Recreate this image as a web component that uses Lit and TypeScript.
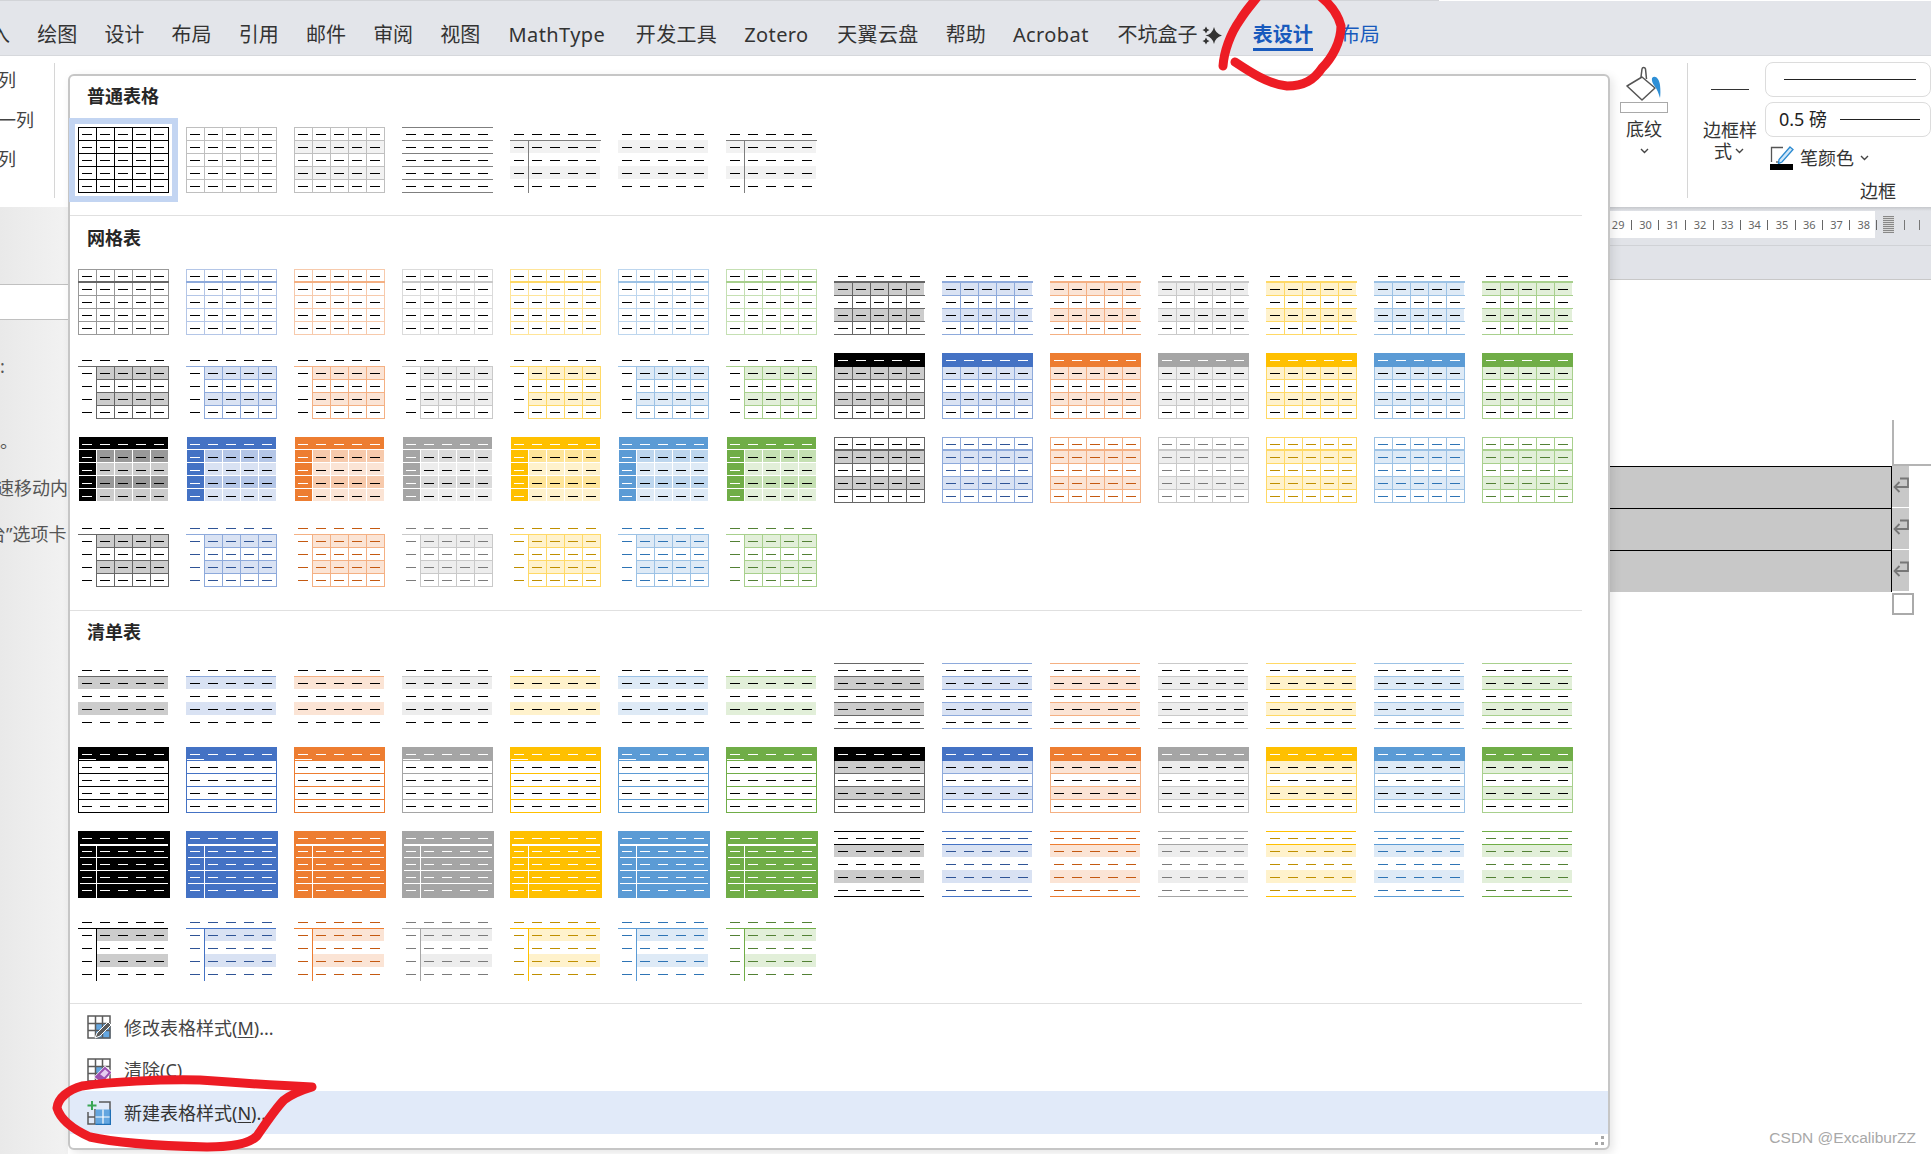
import { LitElement, html, css, svg } from "lit";
import { customElement } from "lit/decorators.js";

// one theme colour of the office palette: strong, 60% line, 40% line, 20% tint, dark text
type Tone = { accent: string; l60: string; l40: string; t20: string; dark: string };
type Shape = [number, number, number, number, string];

const TONES: Tone[] = [
  { accent: "#000000", l60: "#666666", l40: "#999999", t20: "#cccccc", dark: "#000000" },
  { accent: "#4472c4", l60: "#8eaadb", l40: "#b4c6e7", t20: "#d9e2f3", dark: "#2f5496" },
  { accent: "#ed7d31", l60: "#f4b083", l40: "#f7caac", t20: "#fbe4d5", dark: "#c45911" },
  { accent: "#a5a5a5", l60: "#c9c9c9", l40: "#dbdbdb", t20: "#ededed", dark: "#7b7b7b" },
  { accent: "#ffc000", l60: "#ffd966", l40: "#ffe599", t20: "#fff2cc", dark: "#bf8f00" },
  { accent: "#5b9bd5", l60: "#9cc2e5", l40: "#bdd6ee", t20: "#deeaf6", dark: "#2e74b5" },
  { accent: "#70ad47", l60: "#a8d08d", l40: "#c5e0b3", t20: "#e2efd9", dark: "#538135" },
];

const COL = 18;
const ROW = 13;
const W = 91;
const H = 66;

function hlines(rows: number[], color: string, x = 0, w = W): Shape[] {
  return rows.map((j) => [x, j * ROW, w, 1, color] as Shape);
}

function vlines(cols: number[], color: string, y = 0, h = H): Shape[] {
  return cols.map((i) => [i * COL, y, 1, h, color] as Shape);
}

function bands(color: string, x = 0, w = W - 1): Shape[] {
  return [1, 3].map((j) => [x, j * ROW, w, ROW, color] as Shape);
}

function dashes(color: string | ((i: number, j: number) => string)): Shape[] {
  const out: Shape[] = [];
  for (let j = 0; j < 5; j++) {
    for (let i = 0; i < 5; i++) {
      out.push([i * COL + 4, j * ROW + 7, 10, 1, typeof color === "string" ? color : color(i, j)]);
    }
  }
  return out;
}

const ALL_COLS = [0, 1, 2, 3, 4, 5];
const ALL_ROWS = [0, 1, 2, 3, 4, 5];

function plainShapes(n: number): Shape[] {
  const K = "#000000";
  const line = "#7f7f7f";
  const soft = "#bfbfbf";
  const band = "#f2f2f2";
  switch (n) {
    case 1:
      return [...hlines(ALL_ROWS, K), ...vlines(ALL_COLS, K), ...dashes(K)];
    case 2:
      return [...hlines(ALL_ROWS, soft), ...vlines(ALL_COLS, soft), ...dashes(K)];
    case 3:
      return [...bands(band), ...hlines(ALL_ROWS, soft), ...vlines(ALL_COLS, soft), ...dashes(K)];
    case 4:
      return [...hlines(ALL_ROWS, line), ...dashes(K)];
    case 6:
      return [...bands(band), ...dashes(K)];
    default:
      return [...bands(band), ...hlines([1], line), ...vlines([1], line, ROW, H - ROW), ...dashes(K)];
  }
}

function gridThree(t: Tone, text: string): Shape[] {
  return [
    ...bands(t.t20, COL, W - COL),
    ...hlines([1], t.l60),
    ...hlines([2, 3, 4, 5], t.l60, COL, W - COL),
    ...vlines([1, 2, 3, 4, 5], t.l60, ROW, H - ROW),
    ...dashes(text),
  ];
}

const gridKinds: ((t: Tone) => Shape[])[] = [
  (t) => [
    ...hlines(ALL_ROWS, t.l40),
    ...vlines(ALL_COLS, t.l40),
    [0, ROW - 1, W, 2, t.l60],
    ...dashes("#000000"),
  ],
  (t) => [
    ...bands(t.t20),
    ...hlines([2, 3, 4, 5], t.l60),
    ...vlines([1, 2, 3, 4], t.l60, ROW, H - ROW),
    [0, ROW - 1, W, 2, t.l60],
    ...dashes("#000000"),
  ],
  (t) => gridThree(t, "#000000"),
  (t) => [
    ...bands(t.t20),
    ...hlines([2, 3, 4, 5], t.l60),
    ...vlines(ALL_COLS, t.l60, ROW, H - ROW),
    [0, 0, W, ROW + 1, t.accent],
    ...dashes((_, j) => (j === 0 ? "#ffffff" : "#000000")),
  ],
  (t) => {
    const out: Shape[] = [[1, 0, W - 2, ROW - 1, t.accent]];
    for (let j = 1; j < 5; j++) {
      out.push([1, j * ROW, COL - 1, ROW - 1, t.accent]);
      for (let i = 1; i < 5; i++) {
        out.push([i * COL + 1, j * ROW, COL - 1, ROW - 1, j % 2 ? t.l40 : t.t20]);
      }
    }
    return [...out, ...dashes((i, j) => (i === 0 || j === 0 ? "#ffffff" : "#000000"))];
  },
  (t) => [
    ...bands(t.t20),
    ...hlines(ALL_ROWS, t.l60),
    ...vlines(ALL_COLS, t.l60),
    [0, ROW - 1, W, 2, t.l60],
    ...dashes(t.dark),
  ],
  (t) => gridThree(t, t.dark),
];

const listKinds: ((t: Tone) => Shape[])[] = [
  (t) => [...bands(t.t20), ...hlines([1], t.l60, 0, W - 1), ...dashes("#000000")],
  (t) => [...bands(t.t20), ...hlines(ALL_ROWS, t.l60, 0, W - 1), ...dashes("#000000")],
  (t) => [
    ...hlines([2, 3, 4, 5], t.accent),
    ...vlines([0, 5], t.accent),
    [0, 0, W, ROW + 1, t.accent],
    [1, ROW - 1, COL - 1, 1, "#ffffff"],
    ...dashes((_, j) => (j === 0 ? "#ffffff" : "#000000")),
  ],
  (t) => [
    ...bands(t.t20),
    ...hlines([2, 3, 4, 5], t.l60),
    ...vlines([0, 5], t.l60, ROW, H - ROW),
    [0, 0, W, ROW + 1, t.accent],
    ...dashes((_, j) => (j === 0 ? "#ffffff" : "#000000")),
  ],
  (t) => [
    [0, 0, W + 1, H + 1, t.accent],
    [2, ROW, W - 3, 2, "#ffffff"],
    ...hlines([2, 3, 4], "#ffffff", 2, W - 3),
    [COL, ROW + 1, 1, H - ROW, "#ffffff"],
    ...dashes("#ffffff"),
  ],
  (t) => [
    ...bands(t.t20),
    ...hlines([0, 1], t.accent, 0, W - 1),
    [0, H - 1, W - 1, 1, t.accent],
    ...dashes(t.dark),
  ],
  (t) => [
    ...bands(t.t20, COL, W - COL - 1),
    ...hlines([1], t.accent, 0, W - 1),
    ...vlines([1], t.accent, ROW, H - ROW),
    ...dashes(t.dark),
  ],
];

function thumb(shapes: Shape[], selected = false) {
  return html`<svg class="thumb ${selected ? "selected" : ""}" width="91" height="66" viewBox="0 0 91 66" shape-rendering="crispEdges">
    ${shapes.map(([x, y, w, h, c]) => svg`<rect x=${x} y=${y} width=${w} height=${h} fill=${c}></rect>`)}
  </svg>`;
}

function star(x: number, y: number, r: number) {
  const k = r * 0.18;
  return `M${x} ${y - r}Q${x + k} ${y - k} ${x + r} ${y}Q${x + k} ${y + k} ${x} ${y + r}Q${x - k} ${y + k} ${x - r} ${y}Q${x - k} ${y - k} ${x} ${y - r}Z`;
}

const TABS = [
  { text: "绘图" },
  { text: "设计" },
  { text: "布局" },
  { text: "引用" },
  { text: "邮件" },
  { text: "审阅" },
  { text: "视图" },
  { text: "MathType", cls: "latin first-latin" },
  { text: "开发工具", cls: "four" },
  { text: "Zotero", cls: "latin" },
  { text: "天翼云盘", cls: "four" },
  { text: "帮助" },
  { text: "Acrobat", cls: "latin" },
];
const RULER = [29, 30, 31, 32, 33, 34, 35, 36, 37, 38];

const chevron = html`<svg class="chev" width="9" height="6" viewBox="0 0 9 6"><path d="M1 1l3.5 3.5L8 1" fill="none" stroke="#444" stroke-width="1.4"></path></svg>`;

const gridLines = svg`<path d="M1 1h22v22H1zM1 8.5h22M1 15.5h22M8.5 1v22M15.5 1v22" fill="none" stroke="#5a5a5a" stroke-width="1.5"></path>`;

const iconModify = html`<svg class="menu-icon" width="24" height="24" viewBox="0 0 24 24">
  <rect x="8.5" y="8.5" width="15" height="15" fill="#63a6e0"></rect>${gridLines}
  <path d="M21 7l3 3-11 11-5 2 2-5z" fill="#5a5a5a" stroke="#fff" stroke-width="1"></path>
</svg>`;
const iconClear = html`<svg class="menu-icon" width="24" height="24" viewBox="0 0 24 24">
  <rect x="8.5" y="8.5" width="7" height="7" fill="#63a6e0"></rect>${gridLines}
  <path d="M18 9l6 5-9 10-7-5z" fill="#fff" stroke="#fff" stroke-width="2"></path>
  <path d="M18 10l5 4.500-8 9-6-4.500z" fill="#e6cdf0" stroke="#9b4fb0" stroke-width="2"></path>
  <path d="M9 19.500l6 4.500 3.500-3.800-6-4.500z" fill="#9b4fb0"></path>
</svg>`;
const iconNew = html`<svg class="menu-icon" width="24" height="24" viewBox="0 0 24 24">
  <path d="M1 11v12h22V1H12" fill="none" stroke="#5a5a5a" stroke-width="1.500"></path>
  <path d="M1 16h7M8 8v15" fill="none" stroke="#5a5a5a" stroke-width="1.500"></path>
  <rect x="8.500" y="8.500" width="15" height="15" fill="#63a6e0"></rect>
  <path d="M8.500 16h15M16 8.500v15" stroke="#fff" stroke-width="1.200"></path>
  <path d="M8.500 23.500h15V8.500" fill="none" stroke="#1f6fb5" stroke-width="1.500"></path>
  <path d="M5 0v9M.5 4.500h9" stroke="#3aa655" stroke-width="2"></path>
</svg>`;

const returnMark = html`<svg class="ret" width="17" height="18" viewBox="0 0 17 18"><path d="M8 1.500h8v8.500H2.500M7.500 5L2.500 10l5 5" fill="none" stroke="#777" stroke-width="1.800"></path></svg>`;

@customElement("app-root")
export class AppRoot extends LitElement {
  static styles = css`
    :host {
      display: block;
      position: relative;
      width: 1931px;
      height: 1154px;
      overflow: hidden;
      background: #fff;
      color: #333;
      font-family: "Noto Sans", "Noto Sans CJK SC", sans-serif;
    }

    .title-edge {
      width: 1439px;
      height: 1px;
      background: #d2d4d8;
    }
    .tabs {
      display: flex;
      align-items: center;
      gap: 27.200px;
      box-sizing: border-box;
      height: 55px;
      padding: 15px 0 1px;
      background: #e3e5ea;
      border-bottom: 1px solid #d6d8dc;
      font-size: 20px;
      line-height: 28px;
      white-space: nowrap;
    }
    .tab-cut {
      margin-left: -10px;
    }
    .latin {
      letter-spacing: 0.4px;
      margin-right: 1.500px;
    }
    .first-latin {
      margin-left: 1px;
      margin-right: 3.500px;
    }
    .four {
      letter-spacing: 0.3px;
    }
    .tab-sparkle {
      display: flex;
      align-items: center;
      gap: 5px;
      margin-right: 3px;
    }
    .tab-active {
      position: relative;
      color: #185abd;
      font-weight: 700;
    }
    .tab-active::after {
      content: "";
      position: absolute;
      left: 0;
      right: 0;
      bottom: -2px;
      height: 3px;
      background: #185abd;
    }
    .tab-blue {
      color: #185abd;
    }

    .ribbon {
      display: flex;
      height: 151px;
      background: #fff;
      font-size: 18px;
      line-height: 24px;
    }
    .left-group {
      display: flex;
      flex-direction: column;
      gap: 15.500px;
      flex: none;
      box-sizing: border-box;
      width: 55px;
      height: 135px;
      margin-top: 7px;
      padding-top: 5px;
      border-right: 1px solid #d6d6d6;
      overflow: hidden;
      white-space: nowrap;
      color: #444;
    }
    .left-group span {
      margin-left: -2px;
    }
    .left-group span.wide {
      margin-left: -20px;
    }
    .spacer {
      flex: 1;
    }
    .shade {
      display: flex;
      flex-direction: column;
      align-items: center;
      flex: none;
      width: 48px;
      margin-right: 19px;
      padding-top: 9px;
    }
    .swatch {
      box-sizing: border-box;
      width: 48px;
      height: 11px;
      margin-top: 1px;
      border: 1px solid #a9a9a9;
    }
    .shade-label {
      margin-top: 4px;
    }
    .shade .chev {
      margin-top: 7px;
    }
    .divider {
      flex: none;
      width: 1px;
      height: 135px;
      margin-top: 7px;
      background: #d6d6d6;
    }
    .style-col {
      display: flex;
      flex-direction: column;
      align-items: center;
      flex: none;
      width: 56px;
      margin: 0 7px 0 14px;
      padding-top: 33px;
      text-align: center;
    }
    .sample {
      width: 38px;
      height: 1px;
      background: #333;
    }
    .style-label {
      margin-top: 28px;
    }
    .style-second {
      display: flex;
      align-items: center;
      gap: 3px;
      margin: -3px 0 0 -2px;
    }
    .options {
      flex: none;
      width: 166px;
      padding-top: 6px;
    }
    .combo {
      display: flex;
      align-items: center;
      box-sizing: border-box;
      height: 35px;
      margin-bottom: 5px;
      padding-left: 18px;
      border: 1px solid #dcdcdc;
      border-radius: 8px;
      color: #222;
    }
    .combo i {
      display: block;
      width: 132px;
      height: 1px;
      background: #222;
    }
    .combo span {
      margin: -2px 0 0 -5px;
    }
    .combo span + i {
      width: 80px;
      margin: 0 10px 0 auto;
    }
    .pen {
      display: flex;
      align-items: center;
      height: 25px;
      margin-top: 8px;
      padding-left: 5px;
    }
    .pen span {
      margin: 0 6px;
    }
    .group-name {
      margin: 9px 0 0 95px;
    }

    .main {
      display: flex;
      height: 947px;
    }
    .nav {
      flex: none;
      box-sizing: border-box;
      width: 68px;
      padding-top: 77px;
      background: linear-gradient(90deg, #e9e9e9, #f2f2f2);
      font-size: 18px;
      line-height: 24px;
      white-space: nowrap;
      overflow: hidden;
      color: #555;
    }
    .nav-box {
      height: 34px;
      margin-bottom: 34px;
      background: #fff;
      border-top: 1px solid #c0c0c0;
      border-bottom: 1px solid #c0c0c0;
    }
    .nav p {
      margin: 0 0 51px;
    }
    .nav p.dot {
      margin: 0 0 23px;
    }
    .nav p.cut {
      margin: 0 0 22px -4px;
    }
    .nav p.cut2 {
      margin-left: -12px;
    }
    .work {
      flex: 1;
      min-width: 0;
    }
    .ruler-band {
      height: 73px;
      box-sizing: border-box;
      background: #e1e3e8;
      border-bottom: 1px solid #c8c8c8;
    }
    .band-shadow {
      height: 4px;
      background: linear-gradient(#c6c8cc, #e1e3e8);
    }
    .ruler {
      display: flex;
      align-items: center;
      height: 27px;
      font-size: 11px;
      line-height: 16px;
      color: #666;
    }
    .ruler-white {
      display: flex;
      align-items: center;
      box-sizing: border-box;
      flex: none;
      width: 1807px;
      height: 27px;
      padding-left: 1536.500px;
      background: #fff;
    }
    .ruler-cell {
      position: relative;
      flex: none;
      width: 27.300px;
      text-align: center;
    }
    .ruler-cell::after {
      content: "";
      position: absolute;
      right: 0;
      top: 3px;
      width: 1px;
      height: 10px;
      background: #666;
    }
    .hatch {
      flex: none;
      width: 11px;
      height: 17px;
      margin-left: 8px;
      background: repeating-linear-gradient(#888 0 1px, #d8d8d8 1px 2px);
    }
    .tick {
      flex: none;
      width: 1px;
      height: 10px;
      margin-left: 10px;
      background: #777;
    }
    .tick + .tick {
      margin-left: 14px;
    }
    .ruler-line {
      height: 7px;
      border-bottom: 1px solid #d0d2d6;
    }
    .page {
      box-sizing: border-box;
      height: 874px;
      padding: 140px 0 0 1542px;
      background: #fff;
    }
    .crop {
      box-sizing: border-box;
      width: 39px;
      height: 46px;
      margin-left: 282px;
      border-left: 2px solid #b4b4b4;
      border-bottom: 2px solid #b4b4b4;
    }
    .doc-row {
      display: flex;
    }
    .doc-cell {
      box-sizing: border-box;
      width: 282px;
      height: 42px;
      background: #c8c8c8;
      border-top: 1px solid #000;
      border-right: 1px solid #000;
    }
    .doc-row:last-of-type .doc-cell {
      border-bottom: 1px solid #000;
    }
    .doc-mark {
      box-sizing: border-box;
      width: 17px;
      height: 42px;
      padding-top: 11px;
      background: #c8c8c8;
      border-bottom: 1px solid #fff;
      overflow: hidden;
    }
    .ret {
      display: block;
    }
    .end-box {
      box-sizing: border-box;
      width: 22px;
      height: 22px;
      margin: 1px 0 0 282px;
      border: 2px solid #aaa;
    }

    .panel {
      position: absolute;
      left: 68px;
      top: 74px;
      box-sizing: border-box;
      width: 1542px;
      height: 1076px;
      background: #fff;
      border: 2px solid #c6c6c6;
      border-radius: 6px;
      box-shadow: 3px 3px 10px rgba(0, 0, 0, 0.1);
    }
    .section {
      margin-right: 26px;
      padding: 9px 0 22px 8px;
      border-bottom: 1px solid #e0e0e0;
    }
    .section.top {
      padding-top: 8px;
    }
    .section.mid {
      padding: 10px 0 23px 8px;
    }
    .section-label {
      margin: 0 0 19px 9px;
      font-size: 18px;
      line-height: 24px;
      font-weight: 700;
      color: #262626;
    }
    .thumbs {
      display: grid;
      grid-template-columns: repeat(14, 91px);
      grid-auto-rows: 66px;
      column-gap: 17px;
      row-gap: 18px;
    }
    .thumb {
      display: block;
      overflow: visible;
    }
    .thumb.selected {
      background: #fff;
      box-shadow: 0 0 0 3px #fff, 0 0 0 9px #c3d5f2;
    }
    .menu {
      padding-top: 2px;
    }
    .menu-item {
      display: flex;
      align-items: center;
      gap: 13px;
      height: 43px;
      padding-left: 17px;
      font-size: 18px;
      color: #444;
    }
    .menu-item:first-child {
      height: 42px;
    }
    .menu-item.active {
      background: #e1eaf9;
      color: #333;
    }
    .menu-icon {
      flex: none;
    }
    .menu-item span {
      margin-top: -1px;
    }
    .menu-item u {
      text-underline-offset: 2px;
    }
    .grip {
      position: absolute;
      right: 3px;
      bottom: 2px;
    }
    .watermark {
      position: absolute;
      right: 15px;
      bottom: 7px;
      font-family: "Liberation Sans", sans-serif;
      font-size: 15.500px;
      line-height: 18px;
      color: #a8a8a8;
    }
    .marks {
      position: absolute;
      left: 0;
      top: 0;
      pointer-events: none;
    }
  `;

  private renderThumbs(kinds: ((t: Tone) => Shape[])[]) {
    return kinds.flatMap((k) => TONES.map((t) => thumb(k(t))));
  }

  private renderRibbon() {
    return html`<div class="ribbon">
      <div class="left-group">
        <span>列</span>
        <span class="wide">第一列</span>
        <span>列</span>
      </div>
      <div class="spacer"></div>
      <div class="shade">
        <svg width="36" height="36" viewBox="0 0 36 36">
          <path d="M15 12l1-8c.3-2 3-2 3.500 0l1 10M16 12L1 21l15 14 13-12z" fill="#fff" stroke="#555" stroke-width="1.500" stroke-linejoin="round"></path>
          <path d="M26 13c3-3 7 0 8 7 .6 5 .5 10 0 13-1.500-5-3-9-5.500-12-2-2.500-3-5.500-2.500-8z" fill="#2e8fd6"></path>
        </svg>
        <div class="swatch"></div>
        <div class="shade-label">底纹</div>
        ${chevron}
      </div>
      <div class="divider"></div>
      <div class="style-col">
        <div class="sample"></div>
        <div class="style-label">边框样</div>
        <div class="style-second">式 ${chevron}</div>
      </div>
      <div class="options">
        <div class="combo"><i></i></div>
        <div class="combo"><span>0.5 磅</span><i></i></div>
        <div class="pen">
          <svg width="24" height="24" viewBox="0 0 24 24">
            <path d="M13 1.500H1.500V16" fill="none" stroke="#555" stroke-width="1.300"></path>
            <path d="M9 16h-3" fill="none" stroke="#555" stroke-width="1.300"></path>
            <path d="M20 1l3 2.500-11 12.500-3.500 1.500.5-4z" fill="#cfe6f8" stroke="#2b8ad0" stroke-width="1.300"></path>
            <rect x="0" y="18" width="23" height="6" fill="#000"></rect>
          </svg>
          <span>笔颜色</span>${chevron}
        </div>
        <div class="group-name">边框</div>
      </div>
    </div>`;
  }

  private renderPage() {
    return html`<div class="work">
      <div class="ruler-band">
        <div class="band-shadow"></div>
        <div class="ruler">
          <div class="ruler-white">
            ${RULER.map((n) => html`<span class="ruler-cell">${n}</span>`)}
          </div>
          <span class="hatch"></span><span class="tick"></span><span class="tick"></span>
        </div>
        <div class="ruler-line"></div>
      </div>
      <div class="page">
        <div class="crop"></div>
        ${[0, 1, 2].map(
          () => html`<div class="doc-row"><div class="doc-cell"></div><div class="doc-mark">${returnMark}</div></div>`,
        )}
        <div class="end-box"></div>
      </div>
    </div>`;
  }

  private renderPanel() {
    return html`<div class="panel">
      <div class="section top">
        <div class="section-label">普通表格</div>
        <div class="thumbs">
          ${[1, 2, 3, 4, 5, 6, 7].map((n) => thumb(plainShapes(n), n === 1))}
        </div>
      </div>
      <div class="section mid">
        <div class="section-label">网格表</div>
        <div class="thumbs">${this.renderThumbs(gridKinds)}</div>
      </div>
      <div class="section">
        <div class="section-label">清单表</div>
        <div class="thumbs">${this.renderThumbs(listKinds)}</div>
      </div>
      <div class="menu">
        <div class="menu-item">${iconModify}<span>修改表格样式(<u>M</u>)...</span></div>
        <div class="menu-item">${iconClear}<span>清除(<u>C</u>)</span></div>
        <div class="menu-item active">${iconNew}<span>新建表格样式(<u>N</u>)...</span></div>
      </div>
      <svg class="grip" width="10" height="10" viewBox="0 0 10 10" fill="#a8a8a8">
        <rect x="6" y="0" width="3" height="3"></rect><rect x="0" y="6" width="3" height="3"></rect><rect x="6" y="6" width="3" height="3"></rect>
      </svg>
    </div>`;
  }

  render() {
    return html`
      <div class="title-edge"></div>
      <div class="tabs">
        <span class="tab-cut">入</span>
        ${TABS.map((t) => html`<span class=${t.cls ?? ""}>${t.text}</span>`)}
        <span class="tab-sparkle">不坑盒子
          <svg width="20" height="19" viewBox="0 0 20 19" fill="#333">
            <path d="${star(12, 9.500, 8.500)}"></path><path d="${star(4, 4, 3.500)}"></path><path d="${star(4, 15, 3.500)}"></path>
          </svg>
        </span>
        <span class="tab-active">表设计</span>
        <span class="tab-blue">布局</span>
      </div>
      ${this.renderRibbon()}
      <div class="main">
        <div class="nav">
          <div class="nav-box"></div>
          <p>:</p>
          <p class="dot">。</p>
          <p class="cut">速移动内</p>
          <p class="cut2">台”选项卡</p>
        </div>
        ${this.renderPage()}
      </div>
      ${this.renderPanel()}
      <div class="watermark">CSDN @ExcaliburZZ</div>
      <svg class="marks" width="1931" height="1154" viewBox="0 0 1931 1154" fill="none" stroke="#ed1c24" stroke-width="9" stroke-linecap="round" stroke-linejoin="round">
        <path d="M1223 66C1224 52 1230 34 1240 20 1246 10 1252 4 1258 -4"></path>
        <path d="M1320 -4C1330 4 1338 14 1341 26 1341 42 1332 58 1322 68 1314 80 1304 86 1287 86 1268 84 1250 72 1235 62"></path>
        <path d="M312 1087C290 1086 240 1083 200 1080 160 1079 110 1082 82 1086 68 1090 58 1098 57 1108 60 1118 70 1128 90 1137 120 1144 170 1146 207 1147 235 1147 250 1143 257 1136 268 1120 276 1108 284 1100 292 1094 302 1090 312 1087Z"></path>
      </svg>
    `;
  }
}
